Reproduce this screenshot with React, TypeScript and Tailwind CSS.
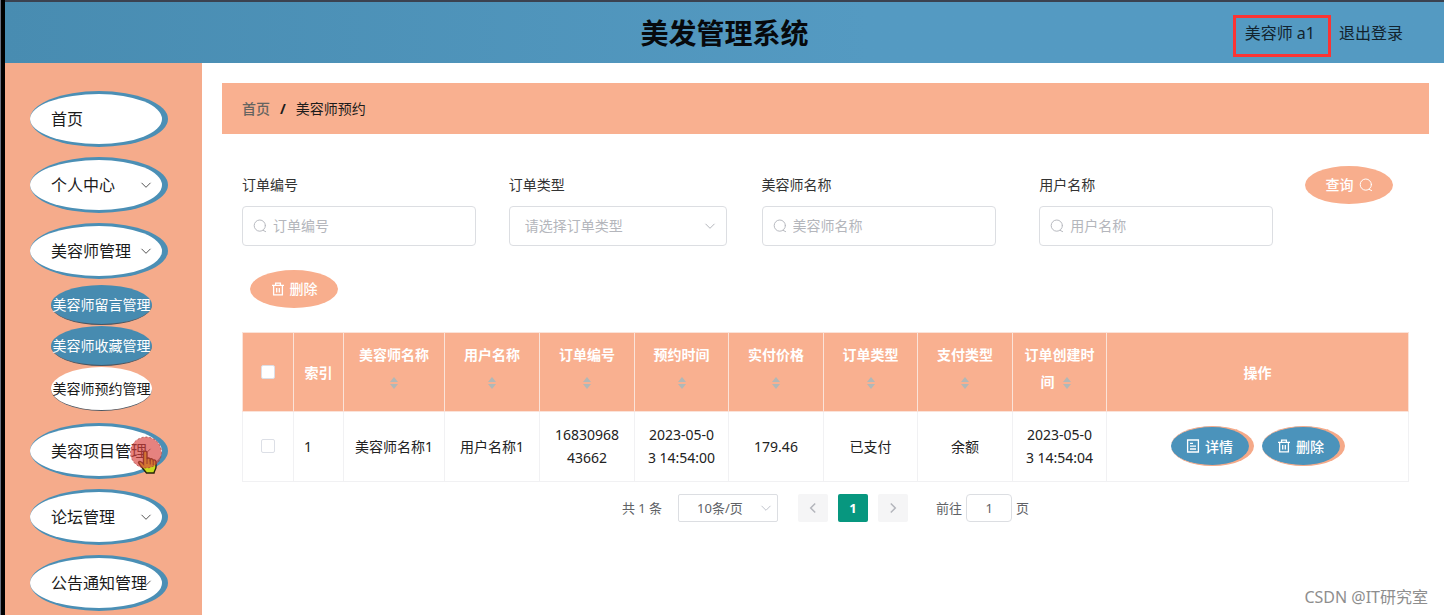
import { useState } from 'react'
import type { ReactNode } from 'react'
import clsx from 'clsx'

const menu = [
  { label: '首页' },
  { label: '个人中心', arrow: true },
  {
    label: '美容师管理',
    arrow: true,
    children: ['美容师留言管理', '美容师收藏管理', '美容师预约管理'],
  },
  { label: '美容项目管理', arrow: true, pointer: true },
  { label: '论坛管理', arrow: true },
  { label: '公告通知管理', arrow: true },
]

const columns = [
  { name: '美容师名称', width: 'w-[101px]' },
  { name: '用户名称', width: 'w-[95px]' },
  { name: '订单编号', width: 'w-[95px]' },
  { name: '预约时间', width: 'w-[94px]' },
  { name: '实付价格', width: 'w-[95px]' },
  { name: '订单类型', width: 'w-[94px]' },
  { name: '支付类型', width: 'w-[95px]' },
  { name: '订单创建时间', width: 'w-[94px]' },
]

const rows = [
  ['美容师名称1', '用户名称1', '1683096843662', '2023-05-03 14:54:00', '179.46', '已支付', '余额', '2023-05-03 14:54:04'],
]

function SearchIcon({ className }: { className?: string }) {
  return (
    <svg viewBox="0 0 14 14" className={clsx('h-3.5 w-3.5', className)} fill="none" stroke="currentColor" strokeLinecap="round">
      <circle cx="6.8" cy="6.6" r="5.6" />
      <path d="M10.2 11.4 L12.6 12.6" />
    </svg>
  )
}

function TrashIcon() {
  return (
    <svg viewBox="0 0 14 14" className="h-3.5 w-3.5" fill="none" stroke="currentColor" strokeWidth="1.3">
      <path d="M1 3.4h12M4.6 3.2V1.2h4.8v2M2.6 3.6v9.2h8.8V3.6M5.7 6v4.4M8.3 6v4.4" />
    </svg>
  )
}

function DocumentIcon() {
  return (
    <svg viewBox="0 0 14 14" className="h-3.5 w-3.5" fill="none" stroke="currentColor" strokeWidth="1.3">
      <path d="M1.6 1h10.8v12H1.6zM4 4.4h3M4 7.2h6M4 10h6" />
    </svg>
  )
}

function Chevron({ className }: { className?: string }) {
  return (
    <svg viewBox="0 0 12 12" className={clsx('pointer-events-none h-3 w-3', className)} fill="none" stroke="currentColor">
      <path d="M1.5 3.8 L6 8.3 L10.5 3.8" />
    </svg>
  )
}

function SortIcon() {
  return (
    <span className="inline-flex w-6 justify-center align-middle">
      <svg viewBox="0 0 10 14" className="h-3.5 w-2.5" fill="#b0b8b8">
        <path d="M5 1 L9 6 H1z M5 13 L1 8 H9z" />
      </svg>
    </span>
  )
}

function ClickPointer() {
  return (
    <svg viewBox="0 0 34 40" className="pointer-events-none absolute -right-0.5 top-2.5 h-10 w-[34px]">
      <path
        d="M14.5 34.5 C11.500 31 9 28 8.500 26.500 C9 24.500 11.500 25.500 13.500 28 V17 C13.500 14.500 17 14.500 17 17 V23 C17.500 21.500 20 21.800 20.200 23.500 C20.800 22.300 23 22.800 23.200 24.300 C24 23.500 26 24 26 26 V31 C26 33 24.500 34.500 24 37 H16.500 Z"
        fill="#c8dc1e"
        stroke="#26240c"
        strokeWidth="1.4"
      />
      <path d="M17 23v5M20.200 24v4.500M23.200 25v4" stroke="#26240c" strokeWidth="1" />
      <circle cx="16" cy="16.500" r="15.500" fill="#d9413d" fillOpacity="0.66" stroke="#a8403c" strokeWidth="0.8" strokeDasharray="2 2" />
    </svg>
  )
}

function Sidebar() {
  const [active, setActive] = useState('美容师预约管理')

  return (
    <nav className="w-[197px] shrink-0 bg-[#f5ab8b] pt-7 pb-1 pl-[25px]">
      <ul className="flex flex-col gap-2.5">
        {menu.map((item) => (
          <li key={item.label}>
            <button
              type="button"
              className="relative flex h-14 w-[138px] items-center whitespace-nowrap rounded-[50%] border-y-3 border-r-6 border-[#4b8fb5] bg-white pl-[21px] text-base text-[#1b1b1b]"
            >
              {item.arrow && <Chevron className="absolute right-2.5 text-[#555]" />}
              <span className="relative">{item.label}</span>
              {item.pointer && <ClickPointer />}
            </button>
            {item.children && (
              <ul className="mt-1.5 flex flex-col gap-px pb-0.5 pl-[21px]">
                {item.children.map((child) => (
                  <li key={child}>
                    <button
                      type="button"
                      onClick={() => setActive(child)}
                      className={clsx(
                        'flex w-[101px] items-center justify-center whitespace-nowrap rounded-[50%] border-b border-[#4a5560] text-sm',
                        child === active ? 'h-11 bg-white text-[#1b1b1b]' : 'h-10 bg-[#478bb0] text-white',
                      )}
                    >
                      {child}
                    </button>
                  </li>
                ))}
              </ul>
            )}
          </li>
        ))}
      </ul>
    </nav>
  )
}

function Field({ id, label, children }: { id: string; label: string; children: ReactNode }) {
  return (
    <div>
      <label htmlFor={id} className="block pb-0.5 leading-[38px] text-[#333]">
        {label}
      </label>
      <div className="relative flex items-center">{children}</div>
    </div>
  )
}

function SearchField({ id, label }: { id: string; label: string }) {
  return (
    <Field id={id} label={label}>
      <SearchIcon className="absolute left-[11px] text-[#b8bac0]" />
      <input
        id={id}
        type="text"
        placeholder={label}
        className="h-10 w-[234px] rounded border border-[#dcdee2] bg-transparent pr-3 pb-0.5 pl-[30px] placeholder:text-[#b4b6bc]"
      />
    </Field>
  )
}

function OvalButton({ children }: { children: ReactNode }) {
  return (
    <button
      type="button"
      className="flex h-[38px] w-[88px] items-center justify-center gap-[5px] rounded-[50%] bg-[#f8ae8d] font-medium text-white"
    >
      {children}
    </button>
  )
}

function RowButton({ children }: { children: ReactNode }) {
  return (
    <button
      type="button"
      className="flex h-10 w-[83px] items-center justify-center gap-[5px] rounded-[50%] border-y border-r-5 border-[#f5a988] bg-[#4b93bb] font-medium text-white"
    >
      {children}
    </button>
  )
}

function Orders() {
  return (
    <table className="mt-6 w-full table-fixed border-collapse text-center">
      <colgroup>
        <col className="w-[51px]" />
        <col className="w-[50px]" />
        {columns.map((column) => (
          <col key={column.name} className={column.width} />
        ))}
        <col />
      </colgroup>
      <thead>
        <tr className="bg-[#f9b090] leading-[27px] text-white">
          <th className="border border-[#fbe3d9] py-3">
            <input
              type="checkbox"
              aria-label="全选"
              className="mx-auto block h-3.5 w-3.5 appearance-none rounded-xs border border-[#dcdfe6] bg-white"
            />
          </th>
          <th className="whitespace-nowrap border border-[#fbe3d9] px-2 py-3">索引</th>
          {columns.map((column) => (
            <th key={column.name} className="border border-[#fbe3d9] px-2.5 pt-2 pb-4">
              {column.name}
              <SortIcon />
            </th>
          ))}
          <th className="border border-[#fbe3d9] px-2.5 py-3">操作</th>
        </tr>
      </thead>
      <tbody>
        {rows.map((row, i) => (
          <tr key={row[2]} className="leading-[23px] text-[#222]">
            <td className="border border-[#f1f1f3] pt-[11px] pb-3">
              <input
                type="checkbox"
                aria-label={`选择 ${i + 1}`}
                className="mx-auto block h-3.5 w-3.5 appearance-none rounded-xs border border-[#dcdfe6] bg-white"
              />
            </td>
            <td className="border border-[#f1f1f3] px-2.5 pt-[11px] pb-3 text-left">{i + 1}</td>
            {row.map((value, n) => (
              <td key={n} className="break-all border border-[#f1f1f3] px-[11px] pt-[11px] pb-3">
                {value}
              </td>
            ))}
            <td className="border border-[#f1f1f3] px-2.5 pt-[11px] pb-3">
              <div className="flex justify-center gap-2">
                <RowButton>
                  <DocumentIcon />
                  详情
                </RowButton>
                <RowButton>
                  <TrashIcon />
                  删除
                </RowButton>
              </div>
            </td>
          </tr>
        ))}
      </tbody>
    </table>
  )
}

function Pagination() {
  return (
    <div className="mt-3 flex items-center justify-center text-[13px] text-[#606266]">
      <span>共 1 条</span>
      <div className="relative ml-4 flex items-center">
        <select
          aria-label="每页条数"
          className="h-7 w-[100px] appearance-none rounded-xs border border-[#dcdee2] bg-transparent pl-[18px]"
        >
          <option>10条/页</option>
        </select>
        <Chevron className="absolute right-1.5 h-2.5 w-2.5 text-[#c0c4cc]" />
      </div>
      <div className="mx-5 flex gap-2.5">
        <button type="button" aria-label="上一页" className="flex h-7 w-[30px] items-center justify-center rounded-xs bg-[#f5f5f6]">
          <Chevron className="rotate-90 stroke-[1.5] text-[#b4b6bc]" />
        </button>
        <button type="button" className="h-7 w-[30px] rounded-xs bg-[#07977f] font-bold text-white">
          1
        </button>
        <button type="button" aria-label="下一页" className="flex h-7 w-[30px] items-center justify-center rounded-xs bg-[#f5f5f6]">
          <Chevron className="-rotate-90 stroke-[1.5] text-[#b4b6bc]" />
        </button>
      </div>
      <label className="ml-2 flex items-center gap-1">
        前往
        <input type="text" defaultValue="1" className="h-7 w-[46px] rounded border border-[#dcdee2] text-center" />
        页
      </label>
    </div>
  )
}

export default function App() {
  return (
    <div className="relative flex min-h-screen bg-white font-['Noto_Sans','Noto_Sans_CJK_SC',sans-serif] text-sm">
      <div className="w-[5px] shrink-0 border-l border-gray-500 bg-black" />
      <div className="flex min-w-0 flex-1 flex-col">
        <header className="relative flex h-[63px] items-center justify-end border-t-2 border-[#3b4250] bg-linear-to-r from-[#488cb1] to-[#549ac2] to-60% pr-[41px] text-base text-[#12232e]">
          <h1 className="absolute inset-x-0 text-center text-[28px] font-bold text-[#07090c]">美发管理系统</h1>
          <div className="relative flex items-center gap-6">
            <span className="relative">
              美容师 a1
              <span className="absolute -top-1.5 -right-4 -bottom-3 -left-3 border-3 border-[#fb3434]" />
            </span>
            <button type="button">退出登录</button>
          </div>
        </header>
        <div className="flex flex-1">
          <Sidebar />
          <main className="min-w-0 flex-1 pt-5 pr-[15px] pl-5">
            <div className="flex h-[51px] items-center gap-2.5 bg-[#f9b090] px-5 text-[#1c1c1c]">
              <a href="#" className="font-medium text-[#666460]">
                首页
              </a>
              <span className="font-bold">/</span>
              <span>美容师预约</span>
            </div>
            <div className="mt-8 px-5">
              <form className="grid grid-cols-[267fr_253fr_278fr_266fr_104fr] items-start">
                <SearchField id="order-no" label="订单编号" />
                <Field id="order-type" label="订单类型">
                  <select
                    id="order-type"
                    className="h-10 w-[218px] appearance-none rounded border border-[#dcdee2] bg-transparent pl-[15px] text-[#b4b6bc]"
                  >
                    <option>请选择订单类型</option>
                    <option>已支付</option>
                  </select>
                  <Chevron className="absolute left-[195px] text-[#b4b6bc]" />
                </Field>
                <SearchField id="stylist" label="美容师名称" />
                <SearchField id="user" label="用户名称" />
                <OvalButton>
                  查询
                  <SearchIcon />
                </OvalButton>
              </form>
              <div className="mt-6 pl-2">
                <OvalButton>
                  <TrashIcon />
                  删除
                </OvalButton>
              </div>
              <Orders />
              <Pagination />
            </div>
          </main>
        </div>
      </div>
      <span className="absolute right-4 bottom-1.5 text-base text-[#8e8e8e]">CSDN @IT研究室</span>
    </div>
  )
}
